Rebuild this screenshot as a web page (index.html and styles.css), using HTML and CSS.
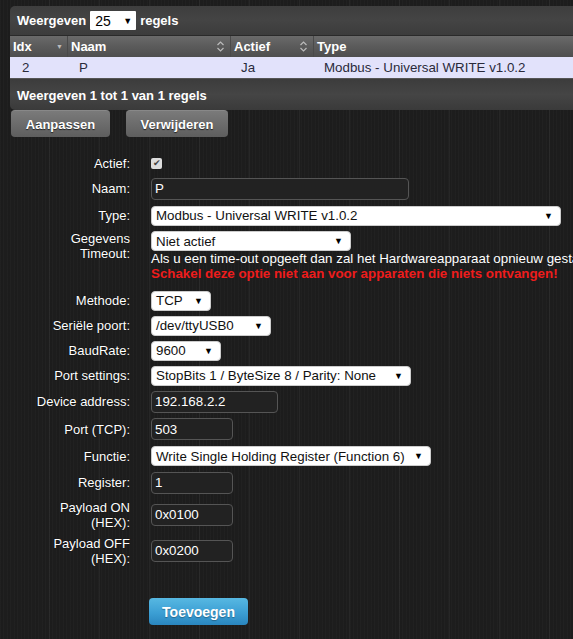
FILE: index.html
```html
<!DOCTYPE html>
<html>
<head>
<meta charset="utf-8">
<link rel="stylesheet" href="styles.css">
</head>
<body>
<div class="page">
  <div class="panel">
    <div class="topbar">Weergeven <span class="lenselect"><span>25</span><span class="arr">▼</span></span> regels</div>
    <div class="thead">
      <div class="c c1">Idx<span class="sortd">▼</span></div>
      <div class="c c2">Naam<span class="sortb">
        <svg width="7" height="11" viewBox="0 0 7 11"><path d="M0.5 4 L3.5 1 L6.5 4 M0.5 7 L3.5 10 L6.5 7" fill="none" stroke="#bbb" stroke-width="1.2"/></svg></span></div>
      <div class="c c3">Actief<span class="sortb">
        <svg width="7" height="11" viewBox="0 0 7 11"><path d="M0.5 4 L3.5 1 L6.5 4 M0.5 7 L3.5 10 L6.5 7" fill="none" stroke="#bbb" stroke-width="1.2"/></svg></span></div>
      <div class="c c4">Type</div>
    </div>
    <div class="trow">
      <div class="d d1">2</div>
      <div class="d d2">P</div>
      <div class="d d3">Ja</div>
      <div class="d d4">Modbus - Universal WRITE v1.0.2</div>
    </div>
    <div class="tfoot">Weergeven 1 tot 1 van 1 regels</div>
  </div>
  <div class="actions">
    <span class="btn gray w1">Aanpassen</span>
    <span class="btn gray w2">Verwijderen</span>
  </div>

  <div class="form">
    <div class="row h-check"><div class="lbl">Actief:</div><div class="fld"><span class="chk">✔</span></div></div>
    <div class="row h-naam"><div class="lbl">Naam:</div><div class="fld"><span class="inp w-naam">P</span></div></div>
    <div class="row h-type"><div class="lbl">Type:</div><div class="fld"><span class="sel w-type"><span>Modbus - Universal WRITE v1.0.2</span><span class="arr">▼</span></span></div></div>
    <div class="row r-timeout"><div class="lbl">Gegevens<br>Timeout:</div><div class="fld">
      <span class="sel w-timeout"><span>Niet actief</span><span class="arr">▼</span></span>
      <div class="note">Als u een time-out opgeeft dan zal het Hardwareapparaat opnieuw gestart worden</div>
      <div class="warn">Schakel deze optie niet aan voor apparaten die niets ontvangen!</div>
    </div></div>
    <div class="row h25"><div class="lbl">Methode:</div><div class="fld"><span class="sel w-meth"><span>TCP</span><span class="arr">▼</span></span></div></div>
    <div class="row h25"><div class="lbl">Seriële poort:</div><div class="fld"><span class="sel w-port"><span>/dev/ttyUSB0</span><span class="arr">▼</span></span></div></div>
    <div class="row h25"><div class="lbl">BaudRate:</div><div class="fld"><span class="sel w-baud"><span>9600</span><span class="arr">▼</span></span></div></div>
    <div class="row h25"><div class="lbl">Port settings:</div><div class="fld"><span class="sel w-set"><span>StopBits 1 / ByteSize 8 / Parity: None</span><span class="arr">▼</span></span></div></div>
    <div class="row h27"><div class="lbl">Device address:</div><div class="fld"><span class="inp w-addr">192.168.2.2</span></div></div>
    <div class="row h28"><div class="lbl">Port (TCP):</div><div class="fld"><span class="inp w-sm">503</span></div></div>
    <div class="row h26"><div class="lbl">Functie:</div><div class="fld"><span class="sel w-func"><span>Write Single Holding Register (Function 6)</span><span class="arr">▼</span></span></div></div>
    <div class="row h27"><div class="lbl">Register:</div><div class="fld"><span class="inp w-sm">1</span></div></div>
    <div class="row h37"><div class="lbl">Payload ON<br>(HEX):</div><div class="fld"><span class="inp w-sm">0x0100</span></div></div>
    <div class="row h35"><div class="lbl">Payload OFF<br>(HEX):</div><div class="fld"><span class="inp w-sm">0x0200</span></div></div>
    <div class="row r-btn"><div class="lbl"></div><div class="fld"><span class="btn blue">Toevoegen</span></div></div>
  </div>
</div>
</body>
</html>
```
FILE: styles.css
```css
html, body {
  margin: 0;
  padding: 0;
  overflow: hidden;
}
body {
  width: 573px;
  height: 639px;
  font-family: "Liberation Sans", Arial, sans-serif;
  font-size: 13px;
  color: #fff;
  background-color: #1d1d1d;
  background-image:
    repeating-linear-gradient(90deg, rgba(255,255,255,0.00) 0 49px, rgba(255,255,255,0.045) 49px 50px),
    repeating-linear-gradient(90deg, rgba(255,255,255,0.015) 0 1px, rgba(0,0,0,0.03) 1px 3px, rgba(255,255,255,0.02) 3px 4px, rgba(0,0,0,0) 4px 7px);
}
.page {
  padding: 6px 0 0 10px;
}
.panel {
  width: 600px;
  border-radius: 5px 0 0 5px;
  overflow: hidden;
}
.topbar {
  height: 30px;
  display: flex;
  align-items: center;
  padding-left: 7px;
  gap: 4px;
  font-weight: bold;
  background: linear-gradient(#3e3e3e, #444 50%, #3c3c3c);
  border-bottom: 1px solid #2a2a2a;
  box-sizing: border-box;
}
.lenselect {
  display: inline-flex;
  align-items: center;
  width: 46px;
  height: 19px;
  box-sizing: border-box;
  background: #fff;
  color: #000;
  font-weight: normal;
  font-size: 14px;
  padding: 0 4px 0 5px;
  border-radius: 1px;
}
.lenselect .arr, .sel .arr {
  margin-left: auto;
  font-size: 9px;
  color: #000;
}
.thead {
  display: flex;
  height: 21px;
  background: linear-gradient(#6a6a6a, #5c5c5c 45%, #4e4e4e);
  font-weight: bold;
  font-size: 13px;
  color: #fff;
}
.c {
  display: flex;
  align-items: center;
  padding-left: 3px;
  box-sizing: border-box;
  border-right: 1px solid #4a4a4a;
}
.c1 { width: 58px; }
.c2 { width: 163px; }
.c3 { width: 83px; }
.c4 { flex: 1; border-right: 0; }
.sortd {
  margin-left: auto;
  margin-right: 4px;
  font-size: 7px;
  color: #bbb;
}
.sortb {
  margin-left: auto;
  margin-right: 6px;
  display: flex;
}
.trow {
  display: flex;
  height: 21px;
  background: #e2e2fb;
  color: #2a2a3a;
  font-size: 13.33px;
  align-items: center;
}
.d { box-sizing: border-box; }
.d1 { width: 58px; padding-left: 12px; }
.d2 { width: 163px; padding-left: 11px; }
.d3 { width: 83px; padding-left: 10px; }
.d4 { flex: 1; padding-left: 10px; }
.tfoot {
  height: 32px;
  box-sizing: border-box;
  padding: 9px 0 0 7px;
  font-weight: bold;
  background: linear-gradient(#3c3c3c, #454545 50%, #3a3a3a);
  border-top: 1px solid #555;
}
.actions {
  display: flex;
  gap: 16px;
  padding-left: 1px;
}
.btn {
  display: inline-flex;
  align-items: center;
  justify-content: center;
  height: 27px;
  border-radius: 4px;
  font-weight: bold;
  font-size: 13px;
  color: #fff;
  box-sizing: border-box;
}
.gray {
  background: linear-gradient(#7a7a7a, #5e5e5e);
  border-top: 1px solid #888;
  text-shadow: 0 1px 1px #222;
}
.w1 { width: 99px; }
.w2 { width: 102px; }
.form {
  margin-top: 15px;
  display: flex;
  flex-direction: column;
}
.row {
  display: grid;
  grid-template-columns: 120px 1fr;
  column-gap: 21px;
  align-items: center;
}
.lbl {
  text-align: right;
  line-height: 15px;
  text-shadow: 0 0 1px #000;
}
.fld {
  white-space: nowrap;
  display: flex;
  flex-direction: column;
  align-items: flex-start;
}
.h-check { height: 22px; }
.h-naam { height: 29px; }
.h-type { height: 25px; }
.h25 { height: 25px; }
.h26 { height: 26px; }
.h27 { height: 27px; }
.h28 { height: 28px; }
.h35 { height: 35px; }
.h37 { height: 37px; }
.chk {
  display: inline-flex;
  align-items: center;
  justify-content: center;
  width: 11px;
  height: 11px;
  background: #ddd;
  border-radius: 2px;
  color: #444;
  font-size: 9px;
  line-height: 1;
}
.inp {
  display: inline-flex;
  align-items: center;
  height: 22px;
  box-sizing: border-box;
  background: #222;
  border: 1px solid #555;
  border-radius: 4px;
  padding-left: 3px;
  font-size: 13.33px;
  color: #fff;
}
.sel {
  display: inline-flex;
  align-items: center;
  height: 20px;
  box-sizing: border-box;
  background: #fff;
  color: #111;
  border-radius: 4px;
  border: 1px solid #ccc;
  padding: 0 7px 0 4px;
  font-size: 13.33px;
}
.w-naam { width: 258px; }
.w-type { width: 410px; }
.w-timeout { width: 200px; }
.r-timeout {
  height: 60px;
  align-items: start;
  padding-top: 3px;
  box-sizing: border-box;
}
.note { font-size: 13.33px; line-height: 15px; }
.warn { font-size: 13.33px; line-height: 15px; color: #ee1c1c; font-weight: bold; }
.w-meth { width: 60px; }
.w-port { width: 120px; }
.w-baud { width: 70px; }
.w-set { width: 260px; }
.w-func { width: 280px; }
.w-addr { width: 127px; }
.w-sm { width: 82px; }
.r-btn { margin-top: 30px; }
.blue {
  width: 99px;
  height: 27px;
  margin-left: -2px;
  font-size: 14px;
  background: linear-gradient(#57b8e2, #3c9fd4 55%, #2a86bf);
  text-shadow: 0 1px 1px rgba(0,0,0,0.3);
}
```
